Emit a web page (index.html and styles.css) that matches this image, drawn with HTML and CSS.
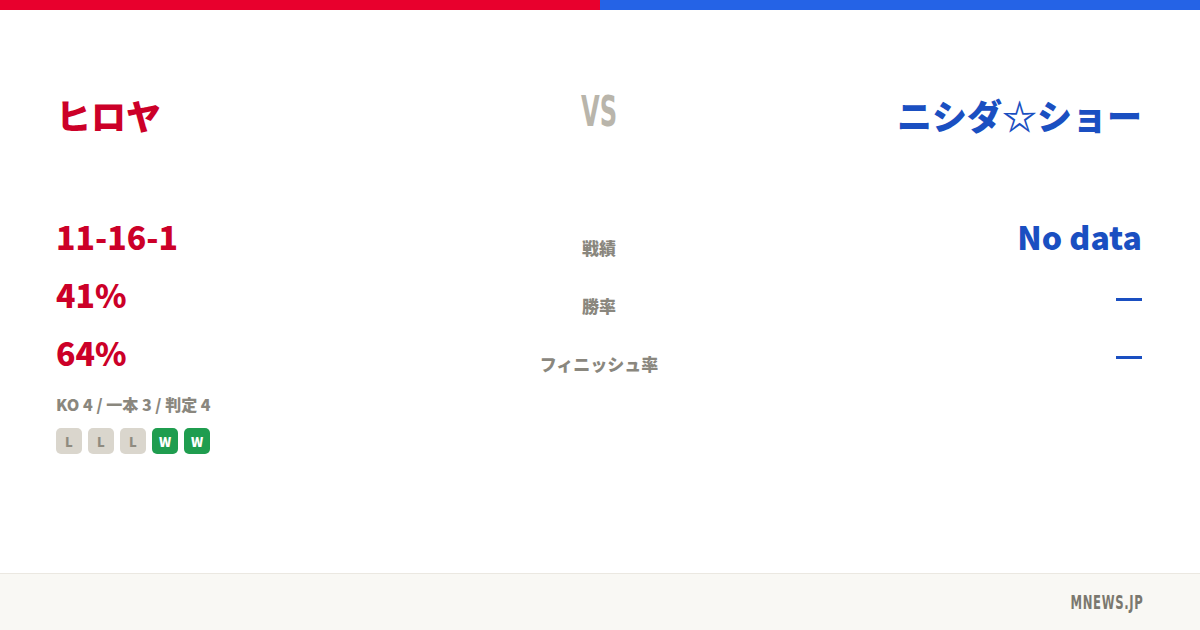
FILE: index.html
```html
<!DOCTYPE html>
<html lang="ja">
<head>
    <meta charset="UTF-8">
    <meta name="viewport" content="width=device-width, initial-scale=1.0">
    <title>ヒロヤ vs ニシダ☆ショー</title>
    <link rel="stylesheet" href="styles.css">
</head>
<body>
    <div class="topbar">
        <div class="bar-red"></div>
        <div class="bar-blue"></div>
    </div>

    <main class="card">
        <section class="names">
            <h1 class="name red">ヒロヤ</h1>
            <div class="vs">VS</div>
            <h1 class="name blue right">ニシダ☆ショー</h1>
        </section>

        <section class="stats">
            <div class="val red">11-16-1</div>
            <div class="label">戦績</div>
            <div class="val blue right">No data</div>

            <div class="val red">41%</div>
            <div class="label">勝率</div>
            <div class="val blue right"><span class="dash"></span></div>

            <div class="val red">64%</div>
            <div class="label">フィニッシュ率</div>
            <div class="val blue right"><span class="dash"></span></div>
        </section>

        <div class="methods">KO 4 / 一本 3 / 判定 4</div>
        <div class="form">
            <span class="badge loss">L</span>
            <span class="badge loss">L</span>
            <span class="badge loss">L</span>
            <span class="badge win">W</span>
            <span class="badge win">W</span>
        </div>
    </main>

    <footer>
        <span class="brand">MNEWS.JP</span>
    </footer>
</body>
</html>
```

FILE: styles.css
```css
* {
    margin: 0;
    padding: 0;
    box-sizing: border-box;
}

body {
    width: 1200px;
    height: 630px;
    font-family: "Noto Sans CJK JP", "Noto Sans", sans-serif;
    font-weight: 900;
    background-color: #fff;
    overflow: hidden;
    display: flex;
    flex-direction: column;
}

.topbar {
    display: flex;
    height: 10px;
}

.bar-red {
    flex: 1;
    background-color: #e8002d;
}

.bar-blue {
    flex: 1;
    background-color: #2563e6;
}

.card {
    flex: 1;
    padding: 80px 58px 0 56px;
}

.red {
    color: #cc0028;
}

.blue {
    color: #1a4fc1;
}

.right {
    text-align: right;
}

.names {
    display: grid;
    grid-template-columns: 1fr 120px 1fr;
    align-items: center;
    height: 50px;
}

.name {
    font-size: 35px;
    line-height: 50px;
    font-weight: 900;
}

.vs {
    text-align: center;
    font-family: "Liberation Sans Narrow", "DejaVu Sans Condensed", sans-serif;
    font-weight: 700;
    font-size: 42px;
    color: #b9b5ab;
    transform: scaleX(0.64);
    margin-top: -8px;
}

.stats {
    display: grid;
    grid-template-columns: 1fr 300px 1fr;
    grid-auto-rows: 58px;
    align-items: start;
    margin-top: 67px;
}

.val {
    font-size: 32px;
    line-height: 58px;
}

.label {
    text-align: center;
    font-size: 17px;
    line-height: 58px;
    padding-top: 12px;
    color: #8a877e;
}

.dash {
    display: inline-block;
    width: 26px;
    height: 3px;
    background-color: #1a4fc1;
    vertical-align: 7px;
}

.methods {
    margin-top: 11px;
    font-size: 16px;
    color: #8a877e;
}

.form {
    display: flex;
    gap: 6px;
    margin-top: 12px;
}

.badge {
    width: 26px;
    height: 26px;
    border-radius: 5px;
    display: flex;
    align-items: center;
    justify-content: center;
    font-size: 13px;
}

.loss {
    background-color: #dad6cd;
    color: #8f8b80;
}

.win {
    background-color: #1f9d4f;
    color: #fff;
}

footer {
    height: 57px;
    background-color: #f9f8f4;
    border-top: 1px solid #ebe8e1;
    display: flex;
    align-items: center;
    justify-content: flex-end;
    padding-right: 56px;
}

.brand {
    font-family: "Liberation Sans Narrow", "DejaVu Sans Condensed", sans-serif;
    font-size: 19px;
    font-weight: 700;
    color: #7b786f;
    letter-spacing: 1px;
    transform: scaleX(0.68);
    transform-origin: right center;
}
```
